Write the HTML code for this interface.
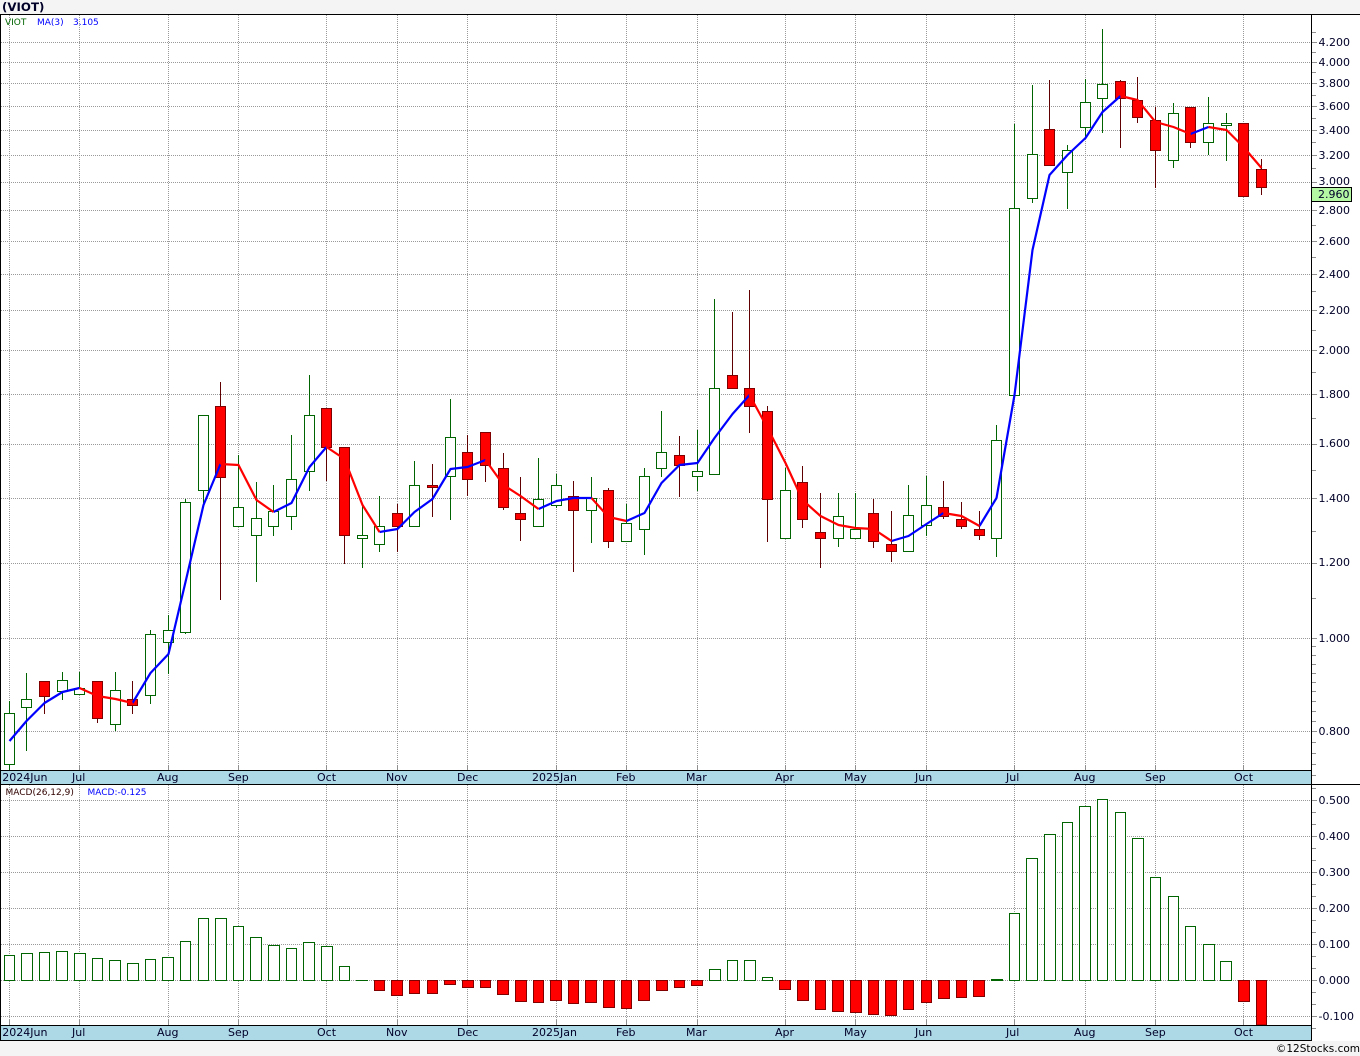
<!DOCTYPE html>
<html><head><meta charset="utf-8"><title>VIOT</title>
<style>
html,body{margin:0;padding:0;background:#f4f4f4}
svg{display:block}
text{font-family:"DejaVu Sans","Liberation Sans",sans-serif;font-size:11px;fill:#000028}
.g{stroke:#999;stroke-width:1;stroke-dasharray:1 1;fill:none}
.t{stroke:#909090;stroke-width:1;fill:none}
.k{fill:#000}
</style></head><body>
<svg xmlns="http://www.w3.org/2000/svg" width="1360" height="1056" viewBox="0 0 1360 1056">
<rect x="0" y="0" width="1360" height="1056" fill="#f4f4f4"/>
<rect x="0" y="14" width="1360" height="1027" fill="#fff"/>
<rect x="0" y="771" width="1311" height="13" fill="#add8e6"/>
<rect x="0" y="1026" width="1311" height="14" fill="#add8e6"/>

<!-- grid price -->
<path class="g" d="M1 42.5H1311M1 62.5H1311M1 83.5H1311M1 106.5H1311M1 130.5H1311M1 155.5H1311M1 182.5H1311M1 210.5H1311M1 241.5H1311M1 274.5H1311M1 310.5H1311M1 350.5H1311M1 394.5H1311M1 444.5H1311M1 498.5H1311M1 563.5H1311M1 638.5H1311M1 731.5H1311"/>
<path class="g" d="M9.5 15V770M79.5 15V770M168.5 15V770M238.5 15V770M326.5 15V770M397.5 15V770M467.5 15V770M556.5 15V770M626.5 15V770M697.5 15V770M785.5 15V770M855.5 15V770M926.5 15V770M1014.5 15V770M1085.5 15V770M1155.5 15V770M1243.5 15V770"/>
<!-- grid macd -->
<path class="g" d="M1 800.5H1311M1 836.5H1311M1 872.5H1311M1 908.5H1311M1 944.5H1311M1 980.5H1311M1 1016.5H1311"/>
<path class="g" d="M9.5 785V1025M79.5 785V1025M168.5 785V1025M238.5 785V1025M326.5 785V1025M397.5 785V1025M467.5 785V1025M556.5 785V1025M626.5 785V1025M697.5 785V1025M785.5 785V1025M855.5 785V1025M926.5 785V1025M1014.5 785V1025M1085.5 785V1025M1155.5 785V1025M1243.5 785V1025"/>
<!-- small solid ticks above date bars -->
<path class="t" d="M9.5 765V770M79.5 765V770M168.5 765V770M238.5 765V770M326.5 765V770M397.5 765V770M467.5 765V770M556.5 765V770M626.5 765V770M697.5 765V770M785.5 765V770M855.5 765V770M926.5 765V770M1014.5 765V770M1085.5 765V770M1155.5 765V770M1243.5 765V770M9.5 1020V1025M79.5 1020V1025M168.5 1020V1025M238.5 1020V1025M326.5 1020V1025M397.5 1020V1025M467.5 1020V1025M556.5 1020V1025M626.5 1020V1025M697.5 1020V1025M785.5 1020V1025M855.5 1020V1025M926.5 1020V1025M1014.5 1020V1025M1085.5 1020V1025M1155.5 1020V1025M1243.5 1020V1025"/>

<!-- axis ticks -->
<path class="t" d="M1312 42.5h5M1312 62.5h5M1312 83.5h5M1312 106.5h5M1312 130.5h5M1312 155.5h5M1312 182.5h5M1312 210.5h5M1312 241.5h5M1312 274.5h5M1312 310.5h5M1312 350.5h5M1312 394.5h5M1312 444.5h5M1312 498.5h5M1312 563.5h5M1312 638.5h5M1312 731.5h5
M1312 32.5h4M1312 52.5h4M1312 72.5h4M1312 95.5h4M1312 118.5h4M1312 142.5h4M1312 168.5h4M1312 196.5h4M1312 225.5h4M1312 257.5h4M1312 291.5h4M1312 330.5h4M1312 372.5h4M1312 418.5h4M1312 470.5h4M1312 531.5h4M1312 598.5h4M1312 646.5h4M1312 655.5h4M1312 664.5h4M1312 673.5h4M1312 682.5h4M1312 691.5h4M1312 701.5h4M1312 711.5h4M1312 721.5h4M1312 742.5h4M1312 753.5h4M1312 764.5h4M1312 775.5h4
M1312 788.5h4M1312 800.5h5M1312 812.5h4M1312 824.5h4M1312 836.5h5M1312 848.5h4M1312 860.5h4M1312 872.5h5M1312 884.5h4M1312 896.5h4M1312 908.5h5M1312 920.5h4M1312 932.5h4M1312 944.5h5M1312 956.5h4M1312 968.5h4M1312 980.5h5M1312 992.5h4M1312 1004.5h4M1312 1016.5h5M1312 1028.5h4"/>

<!-- wicks -->
<path fill="none" stroke="#006400" stroke-width="1" d="M9.5 701V770M26.5 673V751M62.5 672V700M79.5 672V694M115.5 672V731M150.5 630V704M168.5 615V674M185.5 499V634M203.5 415V505M238.5 455V526M256.5 482V582M273.5 485V536M291.5 435V530M309.5 375V491M362.5 505V568M379.5 496V552M414.5 461V526M450.5 399V520M538.5 458V526M556.5 474V508M591.5 477V543M626.5 504V541M644.5 468V555M661.5 411V477M697.5 430V491M714.5 299V474M785.5 468V538M838.5 493V547M855.5 493V538M908.5 485V551M926.5 476V536M996.5 425V557M1014.5 124V398M1032.5 85V203M1067.5 145V209M1085.5 79V138M1102.5 29V133M1173.5 103V168M1208.5 97V155M1226.5 113V161"/>
<path fill="none" stroke="#600000" stroke-width="1" d="M44.5 681V714M97.5 681V723M132.5 681V714M220.5 382V600M326.5 408V481M344.5 447V564M397.5 504V552M432.5 464V517M467.5 435V496M485.5 432V482M503.5 453V510M520.5 477V541M573.5 481V572M608.5 488V548M679.5 436V497M732.5 312V375M749.5 290V433M767.5 406V542M802.5 466V528M820.5 493V568M873.5 499V548M891.5 511V562M943.5 481V519M961.5 502V529M979.5 511V540M1049.5 80V165M1120.5 80V148M1137.5 77V123M1155.5 107V188M1190.5 107V148M1243.5 123V196M1261.5 159V195"/>
<!-- green bodies -->
<path fill="#fff" stroke="#006400" stroke-width="1" d="M4.5 713.5h10v51h-10zM21.5 699.5h10v8h-10zM57.5 680.5h10v11h-10zM74.5 688.5h10v6h-10zM110.5 690.5h10v34h-10zM145.5 634.5h10v61h-10zM163.5 630.5h10v12h-10zM180.5 502.5h10v130h-10zM198.5 415.5h10v75h-10zM233.5 507.5h10v19h-10zM251.5 518.5h10v17h-10zM268.5 511.5h10v15h-10zM286.5 479.5h10v37h-10zM304.5 415.5h10v56h-10zM357.5 535.5h10v3h-10zM374.5 526.5h10v18h-10zM409.5 485.5h10v41h-10zM445.5 437.5h10v39h-10zM533.5 499.5h10v27h-10zM551.5 485.5h10v20h-10zM586.5 498.5h10v12h-10zM621.5 523.5h10v18h-10zM639.5 476.5h10v53h-10zM656.5 452.5h10v16h-10zM692.5 471.5h10v5h-10zM709.5 388.5h10v86h-10zM780.5 490.5h10v48h-10zM833.5 516.5h10v22h-10zM850.5 529.5h10v9h-10zM903.5 515.5h10v36h-10zM921.5 505.5h10v20h-10zM991.5 440.5h10v98h-10zM1009.5 208.5h10v187h-10zM1027.5 154.5h10v44h-10zM1062.5 150.5h10v22h-10zM1080.5 102.5h10v25h-10zM1097.5 84.5h10v14h-10zM1168.5 113.5h10v47h-10zM1203.5 123.5h10v19h-10zM1221.5 123.5h10v2h-10z"/>
<!-- red bodies -->
<path fill="#f00" stroke="#800000" stroke-width="1" d="M39.5 681.5h10v15h-10zM92.5 681.5h10v37h-10zM127.5 699.5h10v6h-10zM215.5 406.5h10v71h-10zM321.5 408.5h10v39h-10zM339.5 447.5h10v88h-10zM392.5 513.5h10v13h-10zM427.5 485.5h10v2h-10zM462.5 452.5h10v27h-10zM480.5 432.5h10v33h-10zM498.5 468.5h10v39h-10zM515.5 513.5h10v6h-10zM568.5 496.5h10v14h-10zM603.5 490.5h10v51h-10zM674.5 455.5h10v10h-10zM727.5 375.5h10v13h-10zM744.5 388.5h10v18h-10zM762.5 411.5h10v88h-10zM797.5 482.5h10v37h-10zM815.5 532.5h10v6h-10zM868.5 513.5h10v28h-10zM886.5 544.5h10v7h-10zM938.5 507.5h10v9h-10zM956.5 519.5h10v7h-10zM974.5 529.5h10v6h-10zM1044.5 129.5h10v36h-10zM1115.5 81.5h10v17h-10zM1132.5 100.5h10v17h-10zM1150.5 120.5h10v30h-10zM1185.5 107.5h10v35h-10zM1238.5 123.5h10v73h-10zM1256.5 169.5h10v18h-10z"/>
<!-- MA line -->
<path fill="none" stroke="#0000ff" stroke-width="2.2" stroke-linejoin="round" d="M9.5 741L26.5 721 44.5 703 62.5 692 79.5 688M132.5 703L150.5 673 168.5 654 185.5 582 203.5 505 220.5 464M273.5 512L291.5 503 309.5 467 326.5 447M379.5 532L397.5 529 414.5 512 432.5 499 450.5 469 467.5 467 485.5 460M538.5 509L556.5 501 573.5 498 591.5 498M626.5 521L644.5 513 661.5 483 679.5 465 697.5 463 714.5 438 732.5 414 749.5 395M891.5 541L908.5 536 926.5 524 943.5 513M979.5 526L996.5 498 1014.5 395 1032.5 250 1049.5 175 1067.5 155 1085.5 138 1102.5 112 1120.5 96M1190.5 134L1208.5 127"/>
<path fill="none" stroke="#ff0000" stroke-width="2.2" stroke-linejoin="round" d="M79.5 688L97.5 696 115.5 699 132.5 703M220.5 464L238.5 465 256.5 500 273.5 512M326.5 447L344.5 459 362.5 505 379.5 532M485.5 460L503.5 485 520.5 496 538.5 509M591.5 498L608.5 517 626.5 521M749.5 395L767.5 428 785.5 463 802.5 500 820.5 516 838.5 525 855.5 528 873.5 529 891.5 541M943.5 513L961.5 516 979.5 526M1120.5 96L1137.5 100 1155.5 122 1173.5 127 1190.5 134M1208.5 127L1226.5 130 1243.5 147 1261.5 168"/>

<!-- MACD green -->
<path fill="#fff" stroke="#006400" stroke-width="1" d="M4.5 955.5h10V980.5h-10zM21.5 953.5h11V980.5h-11zM39.5 952.5h10V980.5h-10zM56.5 951.5h11V980.5h-11zM74.5 953.5h11V980.5h-11zM92.5 958.5h10V980.5h-10zM109.5 960.5h11V980.5h-11zM127.5 963.5h11V980.5h-11zM145.5 959.5h10V980.5h-10zM162.5 957.5h11V980.5h-11zM180.5 941.5h10V980.5h-10zM198.5 918.5h10V980.5h-10zM215.5 918.5h11V980.5h-11zM233.5 926.5h10V980.5h-10zM250.5 937.5h11V980.5h-11zM268.5 945.5h11V980.5h-11zM286.5 948.5h10V980.5h-10zM303.5 942.5h11V980.5h-11zM321.5 946.5h11V980.5h-11zM339.5 966.5h10V980.5h-10zM709.5 969.5h11V980.5h-11zM727.5 960.5h10V980.5h-10zM744.5 960.5h11V980.5h-11zM762.5 977.5h10V980.5h-10zM1009.5 913.5h10V980.5h-10zM1026.5 858.5h11V980.5h-11zM1044.5 834.5h11V980.5h-11zM1062.5 822.5h10V980.5h-10zM1079.5 806.5h11V980.5h-11zM1097.5 799.5h10V980.5h-10zM1115.5 812.5h10V980.5h-10zM1132.5 838.5h11V980.5h-11zM1150.5 877.5h10V980.5h-10zM1168.5 896.5h10V980.5h-10zM1185.5 926.5h10V980.5h-10zM1203.5 944.5h11V980.5h-11zM1220.5 961.5h11V980.5h-11z"/>
<path fill="none" stroke="#006400" stroke-width="1" d="M356 980.5h12"/>
<path fill="none" stroke="#006400" stroke-width="2" d="M991 980h12"/>
<!-- MACD red -->
<path fill="#f00" stroke="#800000" stroke-width="1" d="M374.5 980.5h10V990.5h-10zM391.5 980.5h11V995.5h-11zM409.5 980.5h10V993.5h-10zM427.5 980.5h10V993.5h-10zM444.5 980.5h11V984.5h-11zM462.5 980.5h11V987.5h-11zM480.5 980.5h10V987.5h-10zM497.5 980.5h11V994.5h-11zM515.5 980.5h11V1001.5h-11zM533.5 980.5h10V1002.5h-10zM550.5 980.5h11V1000.5h-11zM568.5 980.5h10V1003.5h-10zM585.5 980.5h11V1002.5h-11zM603.5 980.5h11V1007.5h-11zM621.5 980.5h10V1008.5h-10zM638.5 980.5h11V1000.5h-11zM656.5 980.5h11V990.5h-11zM674.5 980.5h10V987.5h-10zM691.5 980.5h11V985.5h-11zM779.5 980.5h11V989.5h-11zM797.5 980.5h11V1000.5h-11zM815.5 980.5h10V1009.5h-10zM832.5 980.5h11V1011.5h-11zM850.5 980.5h11V1012.5h-11zM868.5 980.5h10V1014.5h-10zM885.5 980.5h11V1015.5h-11zM903.5 980.5h10V1009.5h-10zM921.5 980.5h10V1002.5h-10zM938.5 980.5h11V998.5h-11zM956.5 980.5h10V997.5h-10zM973.5 980.5h11V996.5h-11zM1238.5 980.5h11V1001.5h-11zM1256.5 980.5h10V1025h-10z"/>

<!-- frame -->
<rect class="k" x="0" y="14" width="1360" height="1"/>
<rect class="k" x="0" y="14" width="1" height="1027"/>
<rect class="k" x="1311" y="14" width="1" height="1027"/>
<rect class="k" x="0" y="770" width="1311" height="1"/>
<rect class="k" x="0" y="784" width="1360" height="1"/>
<rect class="k" x="0" y="1025" width="1311" height="1"/>
<rect class="k" x="0" y="1040" width="1312" height="1"/>

<!-- price box -->
<rect x="1311.5" y="187.5" width="40" height="14" fill="#b4f8a4" stroke="#000"/>

<!-- text -->
<text x="2" y="11" style="font-weight:bold;font-size:11.8px" fill="#000">(VIOT)</text>
<text x="5" y="25" style="font-size:9px;fill:#006400">VIOT</text>
<text x="37" y="25" style="font-size:9px;fill:#0000ff">MA(3)</text>
<text x="73" y="25" style="font-size:9px;fill:#0000ff">3.105</text>
<text x="5.5" y="795" style="font-size:9px;fill:#300000">MACD(26,12,9)</text>
<text x="87.5" y="795" style="font-size:9px;fill:#0000ff">MACD:-0.125</text>

<g>
<text x="1318.5" y="46">4.200</text><text x="1318.5" y="66">4.000</text><text x="1318.5" y="87">3.800</text><text x="1318.5" y="110">3.600</text><text x="1318.5" y="134">3.400</text><text x="1318.5" y="159">3.200</text><text x="1318.5" y="185">3.000</text><text x="1318.5" y="214">2.800</text><text x="1318.5" y="245">2.600</text><text x="1318.5" y="278">2.400</text><text x="1318.5" y="314">2.200</text><text x="1318.5" y="354">2.000</text><text x="1318.5" y="398">1.800</text><text x="1318.5" y="447">1.600</text><text x="1318.5" y="502">1.400</text><text x="1318.5" y="566">1.200</text><text x="1318.5" y="642">1.000</text><text x="1318.5" y="735">0.800</text>
<text x="1318" y="198">2.960</text>
<text x="1318.5" y="804">0.500</text><text x="1318.5" y="840">0.400</text><text x="1318.5" y="876">0.300</text><text x="1318.5" y="912">0.200</text><text x="1318.5" y="948">0.100</text><text x="1318.5" y="984">0.000</text><text x="1318.5" y="1020">-0.100</text>
</g>
<g>
<text x="2.3" y="781">2024Jun</text><text x="72" y="781">Jul</text><text x="157" y="781">Aug</text><text x="228" y="781">Sep</text><text x="317" y="781">Oct</text><text x="386" y="781">Nov</text><text x="457" y="781">Dec</text><text x="532" y="781">2025Jan</text><text x="616" y="781">Feb</text><text x="686" y="781">Mar</text><text x="775" y="781">Apr</text><text x="844" y="781">May</text><text x="915" y="781">Jun</text><text x="1006" y="781">Jul</text><text x="1074" y="781">Aug</text><text x="1145" y="781">Sep</text><text x="1234" y="781">Oct</text>
<text x="2.3" y="1036">2024Jun</text><text x="72" y="1036">Jul</text><text x="157" y="1036">Aug</text><text x="228" y="1036">Sep</text><text x="317" y="1036">Oct</text><text x="386" y="1036">Nov</text><text x="457" y="1036">Dec</text><text x="532" y="1036">2025Jan</text><text x="616" y="1036">Feb</text><text x="686" y="1036">Mar</text><text x="775" y="1036">Apr</text><text x="844" y="1036">May</text><text x="915" y="1036">Jun</text><text x="1006" y="1036">Jul</text><text x="1074" y="1036">Aug</text><text x="1145" y="1036">Sep</text><text x="1234" y="1036">Oct</text>
</g>
<text x="1360" y="1052" text-anchor="end" style="font-size:10.5px;fill:#000">©12Stocks.com</text>
</svg>
</body></html>
